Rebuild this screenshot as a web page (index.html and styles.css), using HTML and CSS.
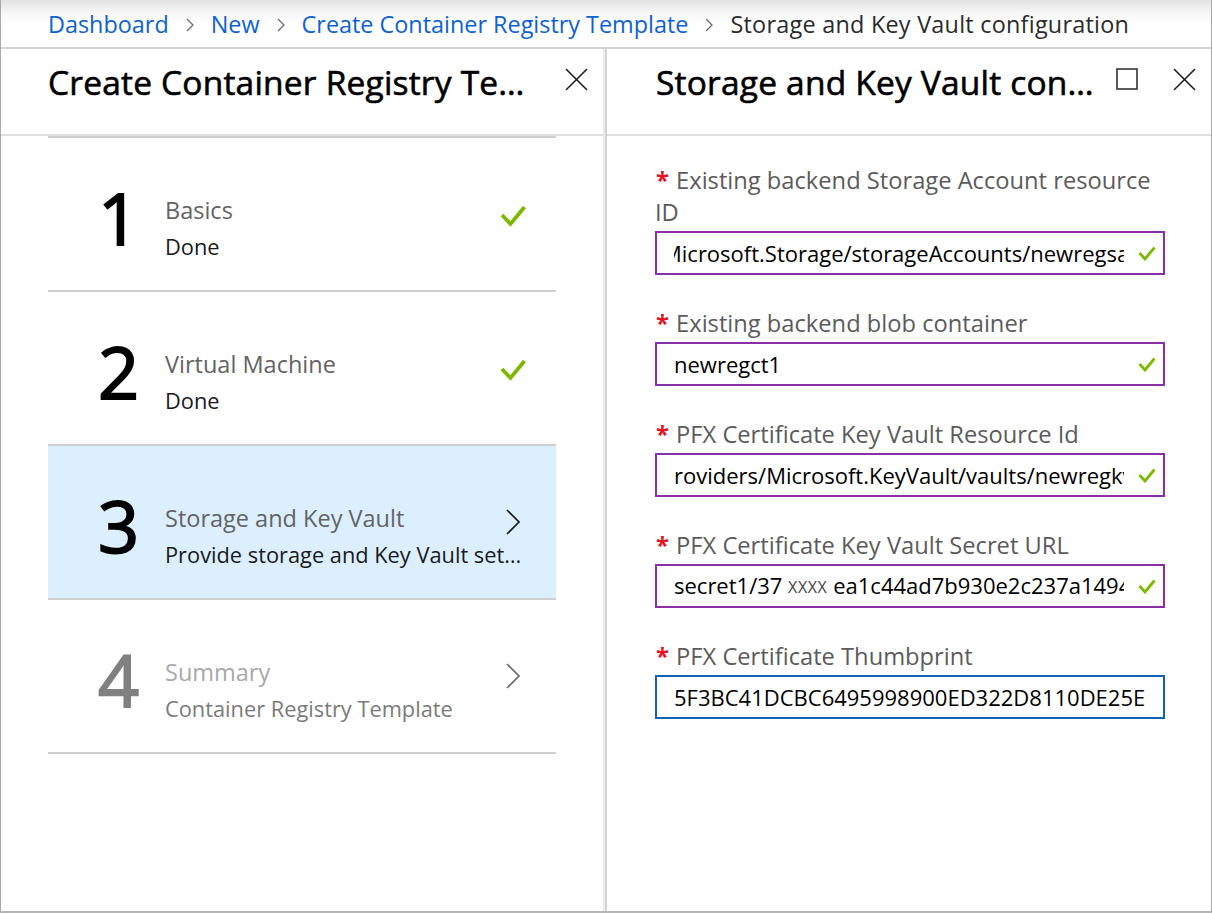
FILE: index.html
```html
<!DOCTYPE html>
<html lang="en">
<head>
<meta charset="utf-8">
<title>Storage and Key Vault configuration</title>
<link rel="stylesheet" href="styles.css">
</head>
<body>
<div class="frame">
  <nav class="crumbs">
    <a class="crumb-link" href="#">Dashboard</a>
    <svg class="crumb-sep" viewBox="0 0 8 14"><path d="M1 1 L7 7 L1 13" /></svg>
    <a class="crumb-link" href="#">New</a>
    <svg class="crumb-sep" viewBox="0 0 8 14"><path d="M1 1 L7 7 L1 13" /></svg>
    <a class="crumb-link" href="#">Create Container Registry Template</a>
    <svg class="crumb-sep" viewBox="0 0 8 14"><path d="M1 1 L7 7 L1 13" /></svg>
    <span class="crumb-current">Storage and Key Vault configuration</span>
  </nav>

  <div class="blades">
    <section class="blade blade-steps">
      <header class="blade-head">
        <h1 class="blade-title">Create Container Registry Te…</h1>
        <div class="head-actions">
          <svg class="head-icon" viewBox="0 0 24 24"><path d="M1 1 L23 23 M23 1 L1 23" /></svg>
        </div>
      </header>
      <ol class="steps">
        <li class="step">
          <span class="step-num">1</span>
          <div class="step-text">
            <div class="step-title">Basics</div>
            <div class="step-sub">Done</div>
          </div>
          <span class="step-icon"><svg class="check" viewBox="0 0 26 22"><path d="M2 10 L10.5 19 L24.5 2" /></svg></span>
        </li>
        <li class="step">
          <span class="step-num">2</span>
          <div class="step-text">
            <div class="step-title">Virtual Machine</div>
            <div class="step-sub">Done</div>
          </div>
          <span class="step-icon"><svg class="check" viewBox="0 0 26 22"><path d="M2 10 L10.5 19 L24.5 2" /></svg></span>
        </li>
        <li class="step current">
          <span class="step-num">3</span>
          <div class="step-text">
            <div class="step-title">Storage and Key Vault</div>
            <div class="step-sub">Provide storage and Key Vault set…</div>
          </div>
          <span class="step-icon"><svg class="chev" viewBox="0 0 14 26"><path d="M1 1 L13 13 L1 25" /></svg></span>
        </li>
        <li class="step disabled">
          <span class="step-num">4</span>
          <div class="step-text">
            <div class="step-title">Summary</div>
            <div class="step-sub">Container Registry Template</div>
          </div>
          <span class="step-icon"><svg class="chev" viewBox="0 0 14 26"><path d="M1 1 L13 13 L1 25" /></svg></span>
        </li>
      </ol>
    </section>

    <section class="blade blade-form">
      <header class="blade-head">
        <h1 class="blade-title">Storage and Key Vault con…</h1>
        <div class="head-actions">
          <svg class="head-icon square" viewBox="0 0 22 22"><rect x="1" y="1" width="20" height="20" /></svg>
          <svg class="head-icon" viewBox="0 0 24 24"><path d="M1 1 L23 23 M23 1 L1 23" /></svg>
        </div>
      </header>
      <form class="form">
        <div class="field">
          <label class="field-label"><span class="req">*</span> Existing backend Storage Account resource ID</label>
          <div class="input">
            <div class="value scrolled">Microsoft.Storage/storageAccounts/newregsa</div>
            <svg class="ok" viewBox="0 0 18 15"><path d="M1.5 7 L7 13 L16.5 1.5" /></svg>
          </div>
        </div>
        <div class="field">
          <label class="field-label"><span class="req">*</span> Existing backend blob container</label>
          <div class="input">
            <div class="value">newregct1</div>
            <svg class="ok" viewBox="0 0 18 15"><path d="M1.5 7 L7 13 L16.5 1.5" /></svg>
          </div>
        </div>
        <div class="field">
          <label class="field-label"><span class="req">*</span> PFX Certificate Key Vault Resource Id</label>
          <div class="input">
            <div class="value">roviders/Microsoft.KeyVault/vaults/newregkv</div>
            <svg class="ok" viewBox="0 0 18 15"><path d="M1.5 7 L7 13 L16.5 1.5" /></svg>
          </div>
        </div>
        <div class="field">
          <label class="field-label"><span class="req">*</span> PFX Certificate Key Vault Secret URL</label>
          <div class="input">
            <div class="value">secret1/37 <span class="redact">XXXX</span> ea1c44ad7b930e2c237a14945</div>
            <svg class="ok" viewBox="0 0 18 15"><path d="M1.5 7 L7 13 L16.5 1.5" /></svg>
          </div>
        </div>
        <div class="field">
          <label class="field-label"><span class="req">*</span> PFX Certificate Thumbprint</label>
          <div class="input focus">
            <div class="value">5F3BC41DCBC6495998900ED322D8110DE25E</div>
          </div>
        </div>
      </form>
    </section>
  </div>
</div>
</body>
</html>
```

FILE: styles.css
```css
html, body {
  margin: 0;
  padding: 0;
  background: #fff;
}

body {
  font-family: "Open Sans", "Noto Sans", sans-serif;
  color: #000;
}

.frame {
  width: 1212px;
  height: 913px;
  box-sizing: border-box;
  border-left: 1px solid #a9a9a9;
  border-right: 1px solid #a9a9a9;
  border-bottom: 2px solid #b5b5b5;
  display: flex;
  flex-direction: column;
  overflow: hidden;
  background: #fff;
}

/* breadcrumb */
.crumbs {
  height: 47px;
  flex: none;
  border-bottom: 2px solid #d4d4d4;
  background: linear-gradient(#e3e3e3, #f6f6f6 12px, #fff 24px);
  display: flex;
  align-items: center;
  padding-left: 47px;
  font-size: 23.4px;
  line-height: 30px;
  white-space: nowrap;
}

.crumb-link {
  color: #0d62d3;
  text-decoration: none;
}

.crumb-current {
  color: #2b2b2b;
  letter-spacing: 0.25px;
}

.crumb-sep {
  width: 8px;
  height: 14px;
  margin: 2px 17px 0 17px;
  fill: none;
  stroke: #6b6b6b;
  stroke-width: 1.3;
}

/* blades */
.blades {
  flex: 1;
  display: flex;
  min-height: 0;
}

.blade-steps {
  width: 602px;
  flex: none;
  border-right: 2px solid #ebebeb;
}

.blade-form {
  flex: 1;
  border-left: 2px solid #d3d3d3;
}

.blade-head {
  height: 87px;
  box-sizing: border-box;
  border-bottom: 2px solid #dedede;
  display: flex;
  align-items: flex-start;
  padding: 13px 15px 0 47px;
}

.blade-form .blade-head {
  padding-left: 49px;
}

.blade-title {
  flex: 1;
  min-width: 0;
  margin: 0;
  font-size: 33.5px;
  line-height: 40px;
  font-weight: 400;
  -webkit-text-stroke: 0.6px #000;
  letter-spacing: 0.2px;
  white-space: nowrap;
  color: #000;
}

.head-actions {
  display: flex;
  gap: 35px;
  margin-top: 6px;
}

.head-icon {
  width: 23px;
  height: 23px;
  fill: none;
  stroke: #1c1c1c;
  stroke-width: 1.6;
}

.head-icon.square {
  width: 22px;
  height: 22px;
  stroke: #333;
  stroke-width: 1.6;
}

/* steps */
.steps {
  list-style: none;
  margin: 0 47px 0 47px;
  padding: 0;
  border-top: 2px solid #cfcfcf;
}

.step {
  display: flex;
  align-items: flex-start;
  height: 152px;
  border-bottom: 2px solid #cfcfcf;
}

.step.current {
  background: #dcefff;
}

.step-num {
  width: 67px;
  flex: none;
  padding-left: 50px;
  margin-top: 43px;
  font-size: 72px;
  line-height: 72px;
  font-weight: 400;
  -webkit-text-stroke: 1.8px currentColor;
  color: #000;
}

.step-text {
  flex: 1;
  min-width: 0;
  margin-top: 54px;
}

.step-title {
  font-size: 23.5px;
  line-height: 36px;
  color: #636363;
  white-space: nowrap;
}

.step-sub {
  font-size: 21.8px;
  line-height: 38px;
  color: #1a1a1a;
  white-space: nowrap;
}

.step-icon {
  width: 28px;
  flex: none;
  margin-right: 29px;
  display: flex;
  justify-content: center;
}

.check {
  width: 26px;
  height: 22px;
  margin-top: 67px;
  fill: none;
  stroke: #7cb900;
  stroke-width: 3.8;
}

.chev {
  width: 14px;
  height: 26px;
  margin-top: 63px;
  fill: none;
  stroke: #1e1e1e;
  stroke-width: 1.7;
}

.step.disabled .step-num {
  color: #808080;
}

.step.disabled .step-title {
  color: #a8a8a8;
}

.step.disabled .step-sub {
  color: #7a7a7a;
}

.step.disabled .chev {
  stroke: #6e6e6e;
}

/* form */
.form {
  padding: 28px 0 0 48px;
  margin: 0;
}

.field {
  width: 510px;
  margin-bottom: 32px;
}

.field-label {
  display: block;
  width: 520px;
  font-size: 23.7px;
  line-height: 32px;
  color: #5b5b5b;
  margin-bottom: 3px;
}

.req {
  color: #e81123;
  font-weight: 700;
  margin-left: 1px;
  margin-right: 1px;
}

.input {
  height: 44px;
  box-sizing: border-box;
  border: 2px solid #8a2fa8;
  display: flex;
  align-items: center;
}

.input.focus {
  border-color: #0f62b5;
}

.value {
  flex: 1;
  min-width: 0;
  overflow: hidden;
  white-space: nowrap;
  margin-left: 17px;
  margin-right: 14px;
  font-size: 22px;
  line-height: 40px;
  color: #000;
}

.value.scrolled {
  text-indent: -12px;
}

.redact {
  font-size: 16px;
  letter-spacing: 0.6px;
  color: #444;
  vertical-align: 1px;
}

.ok {
  width: 18px;
  height: 15px;
  flex: none;
  margin-right: 7px;
  fill: none;
  stroke: #7cb900;
  stroke-width: 2.8;
}
```
